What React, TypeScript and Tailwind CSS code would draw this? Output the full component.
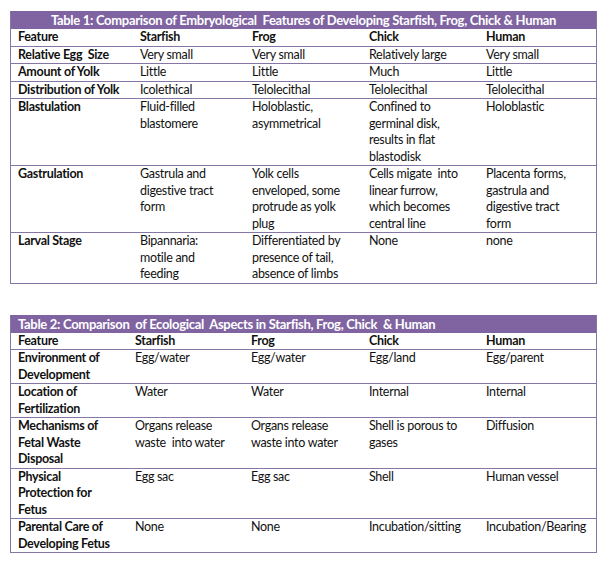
import React from 'react'

type Row = string[][]

const table1: Row[] = [
  [['Relative Egg  Size'], ['Very small'], ['Very small'], ['Relatively large'], ['Very small']],
  [['Amount of Yolk'], ['Little'], ['Little'], ['Much'], ['Little']],
  [['Distribution of Yolk'], ['Icolethical'], ['Telolecithal'], ['Telolecithal'], ['Telolecithal']],
  [
    ['Blastulation'],
    ['Fluid-filled', 'blastomere'],
    ['Holoblastic,', 'asymmetrical'],
    ['Confined to', 'germinal disk,', 'results in flat', 'blastodisk'],
    ['Holoblastic'],
  ],
  [
    ['Gastrulation'],
    ['Gastrula and', 'digestive tract', 'form'],
    ['Yolk cells', 'enveloped, some', 'protrude as yolk', 'plug'],
    ['Cells migate  into', 'linear furrow,', 'which becomes', 'central line'],
    ['Placenta forms,', 'gastrula and', 'digestive tract', 'form'],
  ],
  [
    ['Larval Stage'],
    ['Bipannaria:', 'motile and', 'feeding'],
    ['Differentiated by', 'presence of tail,', 'absence of limbs'],
    ['None'],
    ['none'],
  ],
]

const table2: Row[] = [
  [['Environment of', 'Development'], ['Egg/water'], ['Egg/water'], ['Egg/land'], ['Egg/parent']],
  [['Location of', 'Fertilization'], ['Water'], ['Water'], ['Internal'], ['Internal']],
  [
    ['Mechanisms of', 'Fetal Waste', 'Disposal'],
    ['Organs release', 'waste  into water'],
    ['Organs release', 'waste into water'],
    ['Shell is porous to', 'gases'],
    ['Diffusion'],
  ],
  [['Physical', 'Protection for', 'Fetus'], ['Egg sac'], ['Egg sac'], ['Shell'], ['Human vessel']],
  [['Parental Care of', 'Developing Fetus'], ['None'], ['None'], ['Incubation/sitting'], ['Incubation/Bearing']],
]

const headers = ['Feature', 'Starfish', 'Frog', 'Chick', 'Human']

function Cell({ lines, bold }: { lines: string[]; bold?: boolean }) {
  return (
    <td className={`align-top pl-[7px] pr-0 py-0 whitespace-pre ${bold ? 'font-bold' : ''}`}>
      {lines.map((l, i) => (
        <div key={i}>{l}</div>
      ))}
    </td>
  )
}

function DataTable({
  title,
  centered,
  widths,
  rows,
}: {
  title: string
  centered?: boolean
  widths: number[]
  rows: Row[]
}) {
  return (
    <div className="w-[587px] border-x border-b border-[#8676a6]">
      <div
        className={`h-[18px] bg-[#8064a2] text-white text-[13px] tracking-[-0.3px] font-bold leading-[18px] whitespace-pre ${
          centered ? 'text-center' : 'pl-[7px]'
        }`}
      >
        {title}
      </div>
      <table className="table-fixed border-collapse w-full">
        <colgroup>
          {widths.map((w, i) => (
            <col key={i} style={{ width: w }} />
          ))}
        </colgroup>
        <tbody>
          <tr className="border-b border-[#8676a6] font-bold">
            {headers.map((h) => (
              <Cell key={h} lines={[h]} bold />
            ))}
          </tr>
          {rows.map((row, i) => (
            <tr key={i} className={i < rows.length - 1 ? 'border-b border-[#8676a6]' : ''}>
              {row.map((lines, j) => (
                <Cell key={j} lines={lines} bold={j === 0} />
              ))}
            </tr>
          ))}
        </tbody>
      </table>
    </div>
  )
}

export default function App() {
  return (
    <div className="w-[605px] h-[564px] bg-white pt-[11px] pl-[10px] text-[12.5px] tracking-[-0.3px] leading-[16.5px] text-[#111] font-['Lato','Liberation_Sans',sans-serif] flex flex-col gap-[31px]">
      <DataTable
        title="Table 1: Comparison of Embryological  Features of Developing Starfish, Frog, Chick & Human"
        centered
        widths={[122, 112, 117, 117, 117]}
        rows={table1}
      />
      <DataTable
        title="Table 2: Comparison  of Ecological  Aspects in Starfish, Frog, Chick  & Human"
        widths={[117, 116, 118, 117, 117]}
        rows={table2}
      />
    </div>
  )
}
